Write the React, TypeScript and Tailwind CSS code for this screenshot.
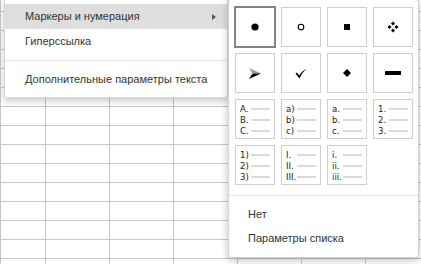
import React from "react";

const font = { fontFamily: '"Liberation Sans", Arial, sans-serif' };

function Icon({ kind }: { kind: string }) {
  switch (kind) {
    case "disc":
      return (
        <svg width="10" height="10" viewBox="0 0 10 10">
          <circle cx="5" cy="5" r="3.6" fill="#000" />
        </svg>
      );
    case "circle":
      return (
        <svg width="10" height="10" viewBox="0 0 10 10">
          <circle cx="5" cy="5" r="2.8" fill="none" stroke="#000" strokeWidth="1.1" />
        </svg>
      );
    case "square":
      return (
        <svg width="10" height="10" viewBox="0 0 10 10">
          <rect x="2" y="2" width="6" height="6" fill="#000" />
        </svg>
      );
    case "diamonds":
      return (
        <svg width="12" height="12" viewBox="0 0 12 12">
          <path d="M6 0.5L8 2.5L6 4.5L4 2.5Z M6 7.5L8 9.5L6 11.5L4 9.5Z M2.5 4L4.5 6L2.5 8L0.5 6Z M9.5 4L11.5 6L9.5 8L7.5 6Z" fill="#000" />
        </svg>
      );
    case "arrow":
      return (
        <svg width="12" height="11" viewBox="0 0 12 11">
          <polygon points="0,0 12,5.5 3.5,5.5" fill="#9a9a9a" />
          <polygon points="3.5,5.5 12,5.5 0,11" fill="#000" />
        </svg>
      );
    case "check":
      return (
        <svg width="12" height="11" viewBox="0 0 12 11">
          <path d="M0.5 5.5 L2 4.6 L4.2 7.6 Q7 3 11.5 0.5 Q7.5 4 4.4 10.5 Z" fill="#000" />
        </svg>
      );
    case "diamond":
      return (
        <svg width="10" height="10" viewBox="0 0 10 10">
          <polygon points="5,1 9,5 5,9 1,5" fill="#000" />
        </svg>
      );
    case "dash":
      return (
        <svg width="16" height="4" viewBox="0 0 16 4">
          <rect x="0" y="0" width="16" height="4" fill="#000" />
        </svg>
      );
  }
  return null;
}

function ListPreview({ labels }: { labels: string[] }) {
  return (
    <div className="flex flex-col gap-[1px] pl-[4px] pr-[4px] pt-[3px]">
      {labels.map((l) => (
        <div key={l} className="flex items-center h-[10px]">
          <span
            className="w-[11px] text-[9.5px] leading-[10px] text-[#222]"
            style={{ fontFamily: '"DejaVu Sans Condensed", "Liberation Sans", sans-serif' }}
          >
            {l}
          </span>
          <span className="flex-1 h-[2px] bg-[#dadada]" />
        </div>
      ))}
    </div>
  );
}

export default function App() {
  const cols = [45, 64, 64, 64, 64, 64, 64];
  const rows = [12, 19, 19, 19, 19, 19, 19, 19, 19, 19, 19, 19, 19, 19, 19];

  const bullets = ["disc", "circle", "square", "diamonds", "arrow", "check", "diamond", "dash"];
  const lists = [
    ["A.", "B.", "C."],
    ["a)", "b)", "c)"],
    ["a.", "b.", "c."],
    ["1.", "2.", "3."],
    ["1)", "2)", "3)"],
    ["I.", "II.", "III."],
    ["i.", "ii.", "iii."],
  ];

  return (
    <div className="relative w-[421px] h-[264px] overflow-hidden bg-white" style={font}>
      {/* spreadsheet grid */}
      <div className="flex flex-col border-l border-[#c6c6c6] w-[460px]">
        {rows.map((h, ri) => (
          <div key={ri} className="flex shrink-0" style={{ height: h }}>
            {cols.map((w, ci) => (
              <div key={ci} className="shrink-0 border-r border-b border-[#c6c6c6]" style={{ width: w }} />
            ))}
          </div>
        ))}
      </div>

      {/* main context menu */}
      <div className="absolute left-[4px] top-[-2px] w-[224px] bg-white border border-[#d9d9d9] rounded-[3px] shadow-[0_3px_7px_rgba(0,0,0,0.22)] py-[5px] text-[11px] text-[#333]">
        <div className="h-[25px] flex items-center pl-[20px] pr-[11px] bg-[#dedede] relative">
          <span>Маркеры и нумерация</span>
          <svg className="ml-auto" width="4" height="6" viewBox="0 0 4 6">
            <polygon points="0,0 4,3 0,6" fill="#555" />
          </svg>
        </div>
        <div className="h-[25px] flex items-center pl-[20px]">Гиперссылка</div>
        <div className="my-[6px] h-px bg-[#e0e0e0]" />
        <div className="h-[25px] flex items-center pl-[20px]">Дополнительные параметры текста</div>
      </div>

      {/* submenu */}
      <div className="absolute left-[228px] top-[-1px] w-[191px] h-[259px] bg-white border border-[#d2d2d2] rounded-[3px] shadow-[0_2px_8px_rgba(0,0,0,0.25)] text-[11px] text-[#333]">
        <div className="grid grid-cols-[40px_40px_40px_40px] auto-rows-[40px] gap-[6px] pl-[6px] pt-[7px]">
          {bullets.map((b, i) => (
            <div
              key={b}
              className={
                i === 0
                  ? "flex items-center justify-center border-2 border-[#7a868e] -m-[1px]"
                  : "flex items-center justify-center border border-[#cfcfcf]"
              }
            >
              <Icon kind={b} />
            </div>
          ))}
          {lists.map((l, i) => (
            <div key={i} className="border border-[#cfcfcf] pt-[1px]">
              <ListPreview labels={l} />
            </div>
          ))}
        </div>
        <div className="mt-[10px] mb-[6px] h-px bg-[#e0e0e0]" />
        <div className="h-[24px] flex items-center pl-[19px]">Нет</div>
        <div className="h-[24px] flex items-center pl-[19px]">Параметры списка</div>
      </div>
    </div>
  );
}
